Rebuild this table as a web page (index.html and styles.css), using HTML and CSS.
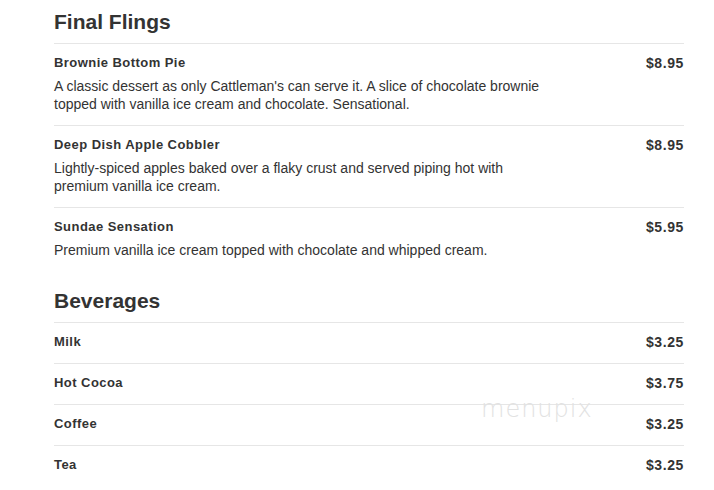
FILE: index.html
```html
<!DOCTYPE html>
<html lang="en">

<head>
    <meta charset="UTF-8">
    <meta name="viewport" content="width=device-width, initial-scale=1.0">
    <title>Menu</title>
    <link rel="stylesheet" href="styles.css">
</head>

<body>
    <div class="menu">
        <div class="section">
            <h2>Final Flings</h2>
            <div class="item">
                <div class="item-info">
                    <p class="item-name">Brownie Bottom Pie</p>
                    <p class="item-desc">A classic dessert as only Cattleman's can serve it. A slice of chocolate brownie
                        topped with vanilla ice cream and chocolate. Sensational.</p>
                </div>
                <span class="price">$8.95</span>
            </div>
            <div class="item">
                <div class="item-info">
                    <p class="item-name">Deep Dish Apple Cobbler</p>
                    <p class="item-desc">Lightly-spiced apples baked over a flaky crust and served piping hot with
                        premium vanilla ice cream.</p>
                </div>
                <span class="price">$8.95</span>
            </div>
            <div class="item">
                <div class="item-info">
                    <p class="item-name">Sundae Sensation</p>
                    <p class="item-desc">Premium vanilla ice cream topped with chocolate and whipped cream.</p>
                </div>
                <span class="price">$5.95</span>
            </div>
        </div>

        <div class="section">
            <h2>Beverages</h2>
            <div class="item">
                <div class="item-info">
                    <p class="item-name">Milk</p>
                </div>
                <span class="price">$3.25</span>
            </div>
            <div class="item">
                <div class="item-info">
                    <p class="item-name">Hot Cocoa</p>
                </div>
                <span class="price">$3.75</span>
            </div>
            <div class="item">
                <div class="item-info">
                    <p class="item-name">Coffee</p>
                </div>
                <span class="price">$3.25</span>
            </div>
            <div class="item">
                <div class="item-info">
                    <p class="item-name">Tea</p>
                </div>
                <span class="price">$3.25</span>
            </div>
        </div>

        <span class="watermark">menupix</span>
    </div>
</body>

</html>
```

FILE: styles.css
```css
body {
    font-family: "Liberation Sans", Arial, sans-serif;
    margin: 0;
    padding: 8px 30px 0 54px;
    background-color: #fff;
    color: #333;
}

.menu {
    position: relative;
    width: 630px;
}

.section {
    margin-bottom: 16px;
}

h2 {
    margin: 0 0 7px;
    font-size: 21px;
    line-height: 28px;
    font-weight: bold;
    color: #333;
}

p {
    margin: 0;
}

.item {
    display: flex;
    justify-content: space-between;
    align-items: flex-start;
    border-top: 1px solid #e6e6e6;
    padding: 10px 0 12px;
}

.item-info {
    width: 500px;
}

.item-name {
    font-size: 13px;
    font-weight: bold;
    line-height: 18px;
    letter-spacing: 0.45px;
}

.item-desc {
    margin-top: 5px;
    font-size: 14px;
    line-height: 18px;
}

.price {
    font-size: 14px;
    font-weight: bold;
    line-height: 18px;
    letter-spacing: 0.6px;
}

/* site watermark over the list */
.watermark {
    position: absolute;
    left: 427px;
    top: 387px;
    font-family: "DejaVu Sans", sans-serif;
    font-size: 24px;
    font-weight: 200;
    letter-spacing: 1px;
    color: #e2e2e2;
}
```
